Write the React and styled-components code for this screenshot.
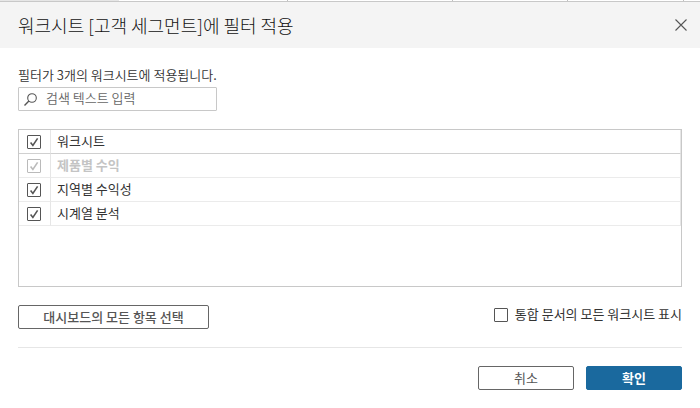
import React, { useState } from "react";
import styled, { createGlobalStyle } from "styled-components";

const worksheets = [
  { id: "product", name: "제품별 수익", locked: true },
  { id: "region", name: "지역별 수익성" },
  { id: "time", name: "시계열 분석" },
];

const App = () => {
  const [search, setSearch] = useState("");
  const [checked, setChecked] = useState(["product", "region", "time"]);
  const [showAll, setShowAll] = useState(false);

  const selectAll = () => setChecked(worksheets.map((w) => w.id));
  const allChecked = checked.length === worksheets.length;

  const toggle = (id) =>
    setChecked(
      checked.includes(id) ? checked.filter((c) => c !== id) : [...checked, id]
    );

  return (
    <>
      <GlobalStyle />
      <Backdrop>
        <span />
        <i />
        <i />
        <i />
        <i />
      </Backdrop>
      <Dialog role="dialog" aria-labelledby="dialog-title">
        <TitleBar>
          <Title id="dialog-title">워크시트 [고객 세그먼트]에 필터 적용</Title>
          <CloseButton type="button" aria-label="닫기">
            <svg width="12" height="12" viewBox="0 0 12 12">
              <path d="M.5.5l11 11M11.5.5l-11 11" fill="none" stroke="#555" strokeWidth="1.1" />
            </svg>
          </CloseButton>
        </TitleBar>

        <Body>
          <Summary htmlFor="search">필터가 3개의 워크시트에 적용됩니다.</Summary>
          <SearchBox>
            <svg width="13" height="13" viewBox="0 0 13 13" fill="none" stroke="#555">
              <circle cx="8" cy="5" r="4.3" strokeWidth="1.1" />
              <path d="M4.9 8.1L.5 12.5" strokeWidth="1.4" />
            </svg>
            <input
              id="search"
              type="text"
              placeholder="검색 텍스트 입력"
              value={search}
              onChange={(e) => setSearch(e.target.value)}
            />
          </SearchBox>

          <ListBox>
            <Table>
              <thead>
                <tr>
                  <th>
                    <Checkbox
                      type="checkbox"
                      id="all"
                      checked={allChecked}
                      onChange={() => (allChecked ? setChecked(["product"]) : selectAll())}
                    />
                  </th>
                  <th>
                    <label htmlFor="all">워크시트</label>
                  </th>
                </tr>
              </thead>
              <tbody>
                {worksheets
                  .filter((w) => w.name.includes(search))
                  .map((w) => (
                    <Row key={w.id} $locked={w.locked}>
                      <td>
                        <Checkbox
                          type="checkbox"
                          id={w.id}
                          disabled={w.locked}
                          checked={checked.includes(w.id)}
                          onChange={() => toggle(w.id)}
                        />
                      </td>
                      <td>
                        <label htmlFor={w.id}>{w.name}</label>
                      </td>
                    </Row>
                  ))}
              </tbody>
            </Table>
          </ListBox>

          <Options>
            <Button type="button" $wide onClick={selectAll}>
              대시보드의 모든 항목 선택
            </Button>
            <ShowAll>
              <Checkbox
                type="checkbox"
                checked={showAll}
                onChange={() => setShowAll(!showAll)}
              />
              <span>통합 문서의 모든 워크시트 표시</span>
            </ShowAll>
          </Options>

          <Footer>
            <Button type="button">취소</Button>
            <Button type="button" $primary>
              확인
            </Button>
          </Footer>
        </Body>
      </Dialog>
    </>
  );
};

export default App;

const GlobalStyle = createGlobalStyle`
  * {
    box-sizing: border-box;
  }

  body {
    margin: 0;
    background: #fff;
    color: #333;
    font-family: "Noto Sans CJK KR", sans-serif;
    font-size: 13px;
    line-height: 16px;
  }

  button, input {
    font: inherit;
    color: inherit;
  }
`;

// sliver of the sheet behind the dialog
const Backdrop = styled.div`
  display: grid;
  grid-template-columns: 119fr 169fr 165fr 115fr 116fr 16fr;
  height: 1px;
  background: #fff;

  span {
    background: #e6e6e6;
  }

  i {
    border-right: 1px solid #c0c0c0;
  }
`;

const Dialog = styled.section`
  border-top: 1px solid #c8c8c8;
`;

const TitleBar = styled.header`
  display: flex;
  align-items: center;
  justify-content: space-between;
  height: 46px;
  padding: 0 13px 0 18px;
  background: #f4f4f4;
`;

const Title = styled.h1`
  margin: 0;
  color: #111;
  font-size: 18px;
  font-weight: 300;
  line-height: 24px;
`;

const CloseButton = styled.button`
  display: flex;
  padding: 0;
  border: 0;
  background: none;
  cursor: pointer;
`;

const Body = styled.div`
  padding: 19px 18px 18px;
`;

const Summary = styled.label`
  display: block;
  margin-bottom: 4px;
  font-weight: 350;
`;

const SearchBox = styled.div`
  display: flex;
  align-items: center;
  gap: 9px;
  width: 199px;
  height: 24px;
  padding: 0 5px;
  border: 1px solid #c8c8c8;
  border-radius: 1px;

  svg {
    flex: none;
  }

  input {
    flex: 1;
    min-width: 0;
    padding: 0 0 2px;
    border: 0;
    outline: 0;
    background: none;
    font-weight: 350;
  }

  input::placeholder {
    color: #666;
  }
`;

const ListBox = styled.div`
  height: 158px;
  margin-top: 18px;
  overflow: auto;
  border: 1px solid #c8c8c8;
`;

const Table = styled.table`
  width: 100%;
  border-spacing: 0;
  text-align: left;

  th,
  td {
    height: 24px;
    padding: 0 6px 2px;
    border-right: 1px solid #e6e6e6;
    border-bottom: 1px solid #ebebeb;
    color: inherit;
    font-weight: 400;
  }

  th {
    border-bottom-color: #d0d0d0;
  }

  th:first-child,
  td:first-child {
    width: 32px;
    padding: 0 0 0 8px;
  }
`;

const Row = styled.tr`
  color: ${(props) => (props.$locked ? "#c4c4c4" : "#333")};

  label {
    font-weight: ${(props) => (props.$locked ? 700 : 400)};
  }
`;

const Checkbox = styled.input`
  appearance: none;
  display: block;
  flex: none;
  width: 14px;
  height: 14px;
  margin: 0;
  border: 1px solid #555;
  border-radius: 1px;
  background: #fff;

  &:checked {
    background: url("data:image/svg+xml,%3Csvg xmlns='http://www.w3.org/2000/svg' viewBox='0 0 12 12'%3E%3Cpath d='M2.6 6.4L4.9 9.4L9.6 2.4' fill='none' stroke='%23555' stroke-width='1.6'/%3E%3C/svg%3E");
  }

  &:disabled {
    opacity: 0.4;
  }
`;

const Options = styled.div`
  display: flex;
  align-items: flex-start;
  justify-content: space-between;
  padding: 18px 0;
  border-bottom: 1px solid #e6e6e6;
`;

const ShowAll = styled.label`
  display: flex;
  align-items: center;
  gap: 7px;
  padding-top: 1px;

  span {
    padding-bottom: 2px;
  }
`;

const Button = styled.button`
  width: ${(props) => (props.$wide ? 191 : 96)}px;
  height: 24px;
  padding: 0;
  border: 1px solid ${(props) => (props.$primary ? "#1a699e" : "#666")};
  border-radius: 2px;
  background: ${(props) => (props.$primary ? "#1a699e" : "#fff")};
  color: ${(props) => (props.$primary ? "#fff" : "#555")};
  font-weight: ${(props) => (props.$primary ? 700 : props.$wide ? 500 : 400)};
  line-height: 16px;
  cursor: pointer;
`;

const Footer = styled.footer`
  display: flex;
  justify-content: flex-end;
  gap: 12px;
  padding-top: 18px;
`;
